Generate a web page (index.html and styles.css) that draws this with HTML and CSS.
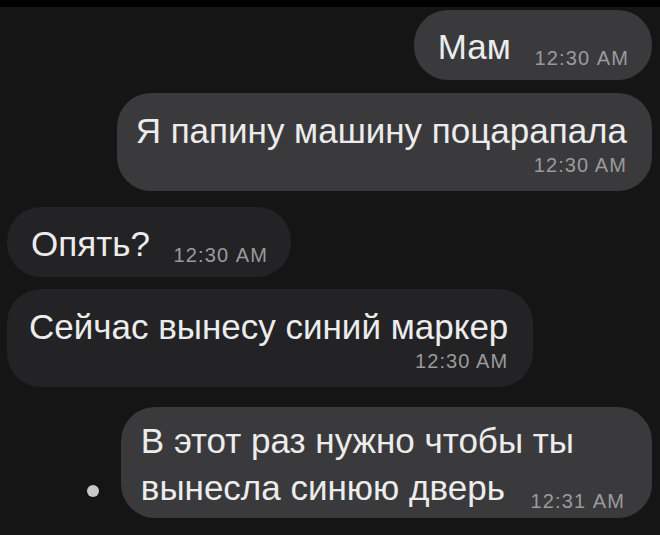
FILE: index.html
```html
<!DOCTYPE html>
<html lang="ru">
<head>
  <meta charset="UTF-8" />
  <meta name="viewport" content="width=device-width, initial-scale=1.0"/>
  <title>Переписка</title>
  <link rel="stylesheet" href="styles.css">
</head>
<body>

  <div class="topbar"></div>

  <div class="chat">
    <div class="row out">
      <div class="bubble sent short">Мам <span class="time">12:30 AM</span></div>
    </div>

    <div class="row out next">
      <div class="bubble sent long">
        <div class="text">Я папину машину поцарапала</div>
        <div class="time below">12:30 AM</div>
      </div>
    </div>

    <div class="row in switch">
      <div class="bubble received short">Опять? <span class="time">12:30 AM</span></div>
    </div>

    <div class="row in">
      <div class="bubble received long">
        <div class="text">Сейчас вынесу синий маркер</div>
        <div class="time below">12:30 AM</div>
      </div>
    </div>

    <div class="row out switch last">
      <span class="dot"></span>
      <div class="bubble sent multi">
        В этот раз нужно чтобы ты<br>
        вынесла синюю дверь <span class="time">12:31 AM</span>
      </div>
    </div>
  </div>

</body>
</html>
```

FILE: styles.css
```css
body {
  margin: 0;
  font-family: "Liberation Sans", Arial, sans-serif;
  background: #151515;
  color: #ececec;
  height: 535px;
  overflow: hidden;
}
.topbar {
  height: 7px;
  background: #000;
}
.chat {
  display: flex;
  flex-direction: column;
  gap: 12px;
  padding: 3px 8px 0 7px;
}
.row {
  display: flex;
  align-items: center;
}
.row.out {
  justify-content: flex-end;
}
.row.in {
  justify-content: flex-start;
}
.row.next {
  margin-top: 1px;
}
.row.switch {
  margin-top: 4px;
}
.row.last {
  margin-top: 8px;
}
.bubble {
  font-size: 35px;
  line-height: 40px;
  border-radius: 34px;
  box-sizing: border-box;
}
.sent {
  background: #3a3a3c;
}
.received {
  background: #232325;
}
.time {
  font-size: 20px;
  letter-spacing: 1.1px;
  line-height: 24px;
  color: #9a9a9c;
}
.short {
  height: 70px;
  padding: 17px 23px 0 24px;
}
.short .time {
  margin-left: 14px;
  vertical-align: -6px;
}
.long {
  padding: 18px 25px 14px 22px;
}
.sent.long {
  padding-left: 19px;
}
.below {
  text-align: right;
  margin-top: 2px;
}
.multi {
  line-height: 47px;
  height: 111px;
  padding: 10px 27px 0 20px;
}
.multi .time {
  margin-left: 16px;
  vertical-align: -8px;
}
.dot {
  width: 12px;
  height: 12px;
  border-radius: 50%;
  background: #c8c8c8;
  margin: 56px 22px 0 0;
}
```
